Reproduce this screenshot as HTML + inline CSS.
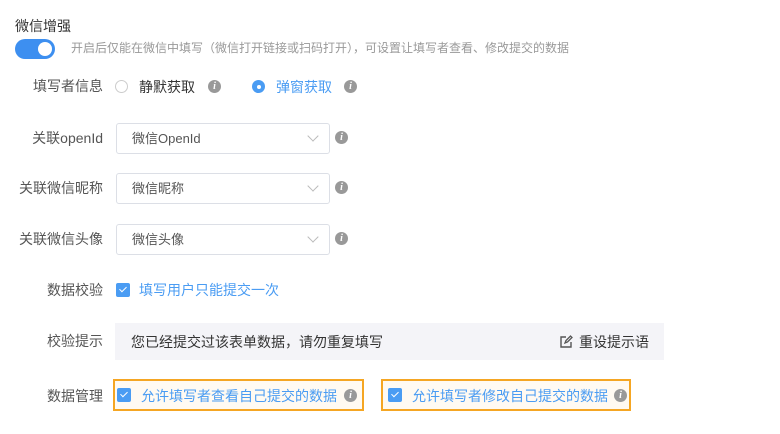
<!DOCTYPE html><html><head><meta charset="utf-8"><style>
body{margin:0;width:780px;height:434px;background:#fff;font-family:"Liberation Sans","Noto Sans CJK SC",sans-serif;font-size:14px;color:#333;position:relative;overflow:hidden}
.a{position:absolute;white-space:nowrap;line-height:16px}
.lbl{position:absolute;right:677px;white-space:nowrap;color:#555;font-size:14px;line-height:16px}
.info{position:absolute;width:13px;height:13px;border-radius:50%;background:#999;color:#fff;font:italic bold 10px/13px "Liberation Serif",serif;text-align:center}
.sel{position:absolute;left:116px;width:214px;height:31px;border:1px solid #dcdfe6;border-radius:3px;box-sizing:border-box;}
.sel span{position:absolute;left:15px;top:7px;color:#555;font-size:13px;line-height:16px}
.sel i{position:absolute;right:12px;top:8px;width:7px;height:7px;border-right:1px solid #bbb;border-bottom:1px solid #bbb;transform:rotate(45deg)}
.cb{position:absolute;width:14px;height:14px;background:#4a9cf3;border-radius:2px}
.cb:after{content:"";position:absolute;left:4.5px;top:2px;width:3px;height:6px;border:solid #fff;border-width:0 1.5px 1.5px 0;transform:rotate(45deg)}
.blue{color:#4a9cf3}
</style></head><body>
<div class="a" style="left:15px;top:18px;font-size:14px;color:#333">微信增强</div>
<div class="a" style="left:15px;top:39px;width:40px;height:20px;border-radius:10px;background:#3d8ff0"><div style="position:absolute;right:3px;top:3px;width:14px;height:14px;border-radius:50%;background:#fff"></div></div>
<div class="a" style="left:71px;top:40px;font-size:12px;color:#999">开启后仅能在微信中填写（微信打开链接或扫码打开），可设置让填写者查看、修改提交的数据</div>

<div class="lbl" style="top:78px">填写者信息</div>
<div class="a" style="left:115px;top:80px;width:13px;height:13px;border:1px solid #ccc;border-radius:50%;box-sizing:border-box"></div>
<div class="a" style="left:139px;top:79px">静默获取</div>
<div class="info" style="left:208px;top:80px">i</div>
<div class="a" style="left:252px;top:80px;width:13px;height:13px;background:#4a9cf3;border-radius:50%"><div style="position:absolute;left:4.5px;top:4.5px;width:4px;height:4px;background:#fff;border-radius:50%"></div></div>
<div class="a blue" style="left:276px;top:79px">弹窗获取</div>
<div class="info" style="left:344px;top:80px">i</div>

<div class="lbl" style="top:130px">关联openId</div>
<div class="sel" style="top:123px"><span>微信OpenId</span><i></i></div>
<div class="info" style="left:335px;top:131px">i</div>
<div class="lbl" style="top:180px">关联微信昵称</div>
<div class="sel" style="top:173px"><span>微信昵称</span><i></i></div>
<div class="info" style="left:335px;top:181px">i</div>
<div class="lbl" style="top:231px">关联微信头像</div>
<div class="sel" style="top:224px"><span>微信头像</span><i></i></div>
<div class="info" style="left:335px;top:232px">i</div>

<div class="lbl" style="top:282px">数据校验</div>
<div class="cb" style="left:116px;top:283px"></div>
<div class="a blue" style="left:139px;top:282px">填写用户只能提交一次</div>

<div class="lbl" style="top:333px">校验提示</div>
<div class="a" style="left:115px;top:323px;width:549px;height:37px;background:#f4f4f8"></div>
<div class="a" style="left:131px;top:334px">您已经提交过该表单数据，请勿重复填写</div>
<svg class="a" style="left:559px;top:335px" width="14" height="14" viewBox="0 0 14 14"><path d="M7 2H2v10h10V7" fill="none" stroke="#555" stroke-width="1.4"/><path d="M6 8l1-2.5L11.5 1 13 2.5 8.5 7z" fill="none" stroke="#555" stroke-width="1.3"/></svg>
<div class="a" style="left:579px;top:334px">重设提示语</div>

<div class="lbl" style="top:388px">数据管理</div>
<div class="a" style="left:113px;top:379px;width:251px;height:32px;border:2px solid #f5a623;background:#fffaf2;box-sizing:border-box"></div>
<div class="cb" style="left:117px;top:388px"></div>
<div class="a blue" style="left:141px;top:388px">允许填写者查看自己提交的数据</div>
<div class="info" style="left:344px;top:389px">i</div>
<div class="a" style="left:381px;top:379px;width:250px;height:32px;border:2px solid #f5a623;background:#fffaf2;box-sizing:border-box"></div>
<div class="cb" style="left:388px;top:388px"></div>
<div class="a blue" style="left:412px;top:388px">允许填写者修改自己提交的数据</div>
<div class="info" style="left:614px;top:389px">i</div>
</body></html>
